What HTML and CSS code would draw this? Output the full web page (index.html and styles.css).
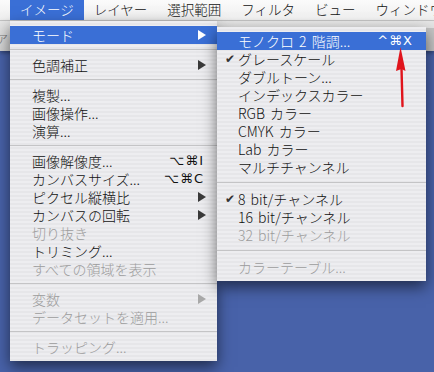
FILE: index.html
```html
<!DOCTYPE html>
<html lang="ja">
<head>
    <meta charset="UTF-8">
    <title>イメージ メニュー</title>
    <link rel="stylesheet" href="styles.css">
</head>
<body>
<!-- Menubar -->
<div class="menubar">
    <span class="menubar-item active">イメージ</span>
    <span class="menubar-item">レイヤー</span>
    <span class="menubar-item">選択範囲</span>
    <span class="menubar-item">フィルタ</span>
    <span class="menubar-item">ビュー</span>
    <span class="menubar-item">ウィンドウ</span>
</div>

<!-- Options bar behind the menus -->
<div class="options-bar">
    <span class="options-label">ア</span>
    <span class="options-edge"></span>
</div>

<!-- Image menu -->
<div class="menu main-menu">
    <div class="menu-item selected"><span class="label">モード</span><span class="arrow"></span></div>
    <div class="separator"></div>
    <div class="menu-item"><span class="label">色調補正</span><span class="arrow"></span></div>
    <div class="separator"></div>
    <div class="menu-item"><span class="label">複製...</span></div>
    <div class="menu-item"><span class="label">画像操作...</span></div>
    <div class="menu-item"><span class="label">演算...</span></div>
    <div class="separator"></div>
    <div class="menu-item"><span class="label">画像解像度...</span><span class="shortcut">⌥⌘I</span></div>
    <div class="menu-item"><span class="label">カンバスサイズ...</span><span class="shortcut">⌥⌘C</span></div>
    <div class="menu-item"><span class="label">ピクセル縦横比</span><span class="arrow"></span></div>
    <div class="menu-item"><span class="label">カンバスの回転</span><span class="arrow"></span></div>
    <div class="menu-item disabled"><span class="label">切り抜き</span></div>
    <div class="menu-item"><span class="label">トリミング...</span></div>
    <div class="menu-item disabled"><span class="label">すべての領域を表示</span></div>
    <div class="separator"></div>
    <div class="menu-item disabled"><span class="label">変数</span><span class="arrow"></span></div>
    <div class="menu-item disabled"><span class="label">データセットを適用...</span></div>
    <div class="separator"></div>
    <div class="menu-item disabled"><span class="label">トラッピング...</span></div>
</div>

<!-- Mode submenu -->
<div class="menu sub-menu">
    <div class="menu-item selected"><span class="label">モノクロ 2 階調...</span><span class="shortcut">^⌘X</span></div>
    <div class="menu-item checked"><span class="label">グレースケール</span></div>
    <div class="menu-item"><span class="label">ダブルトーン...</span></div>
    <div class="menu-item"><span class="label">インデックスカラー</span></div>
    <div class="menu-item"><span class="label">RGB カラー</span></div>
    <div class="menu-item"><span class="label">CMYK カラー</span></div>
    <div class="menu-item"><span class="label">Lab カラー</span></div>
    <div class="menu-item"><span class="label">マルチチャンネル</span></div>
    <div class="separator"></div>
    <div class="menu-item checked"><span class="label">8 bit/チャンネル</span></div>
    <div class="menu-item"><span class="label">16 bit/チャンネル</span></div>
    <div class="menu-item disabled"><span class="label">32 bit/チャンネル</span></div>
    <div class="separator"></div>
    <div class="menu-item disabled"><span class="label">カラーテーブル...</span></div>
</div>

<!-- Red pointer arrow -->
<svg class="pointer" width="16" height="64" viewBox="0 0 16 64">
    <path d="M8.5 22 L9.5 60" stroke="#e0141c" stroke-width="2.4" stroke-linecap="round" fill="none"/>
    <path d="M7.5 1 L12.5 25 L8.5 23 L3 25 Z" fill="#e0141c"/>
</svg>
</body>
</html>
```
FILE: styles.css
```css
/* General */
body {
    margin: 0;
    width: 434px;
    height: 372px;
    overflow: hidden;
    position: relative;
    background-color: #4862a9;
    font-family: "Noto Sans CJK JP", "DejaVu Sans", sans-serif;
    font-size: 14px;
    font-weight: 300;
    color: #111;
}

/* Menubar */
.menubar {
    height: 21px;
    display: flex;
    align-items: stretch;
    padding-left: 10px;
    font-size: 13.5px;
    background: linear-gradient(#fbfbfb, #eeeeee);
    border-bottom: 1px solid #c8c8c8;
    box-sizing: border-box;
    white-space: nowrap;
}

.menubar-item {
    display: flex;
    align-items: center;
    padding: 0 10px;
    line-height: 1;
}

.menubar-item.active {
    background-color: #3a6fd6;
    color: #fff;
}

/* Options bar */
.options-bar {
    height: 30px;
    display: flex;
    justify-content: space-between;
    background: linear-gradient(#e6e6e6, #d2d2d2);
    box-shadow: 0 2px 4px rgba(0, 0, 0, 0.35);
}

.options-label {
    font-size: 12px;
    color: #777;
    padding: 9px 0 0 0;
    margin-left: -4px;
}

.options-edge {
    width: 8px;
    margin-top: 7px;
    border-left: 1px solid #aaa;
    background: #c4c4c4;
}

/* Menus */
.menu {
    position: absolute;
    padding: 5px 0;
    background: repeating-linear-gradient(#ededf0 0, #ededf0 2px, #e6e6e9 2px, #e6e6e9 4px);
    box-shadow: 0 6px 14px rgba(0, 0, 0, 0.55);
    white-space: nowrap;
}

.main-menu {
    left: 10px;
    top: 21px;
    width: 207px;
}

.sub-menu {
    left: 217px;
    top: 27px;
    width: 209px;
}

.menu-item {
    height: 18px;
    line-height: 18px;
    display: flex;
    align-items: center;
    padding: 0 13px 0 22px;
    position: relative;
}

.sub-menu .menu-item {
    padding-left: 21px;
}

.menu-item .label {
    flex: 1;
    word-spacing: 2px;
}

.menu-item .shortcut {
    font-family: "DejaVu Sans", sans-serif;
    font-size: 13px;
    font-weight: normal;
    letter-spacing: 1px;
}

.menu-item .arrow {
    width: 0;
    height: 0;
    margin-right: -2px;
    border-left: 8px solid #3a3a3a;
    border-top: 5px solid transparent;
    border-bottom: 5px solid transparent;
}

.menu-item.selected {
    background-color: #3a6fd6;
    color: #fff;
}

.menu-item.selected .arrow {
    border-left-color: #fff;
}

.menu-item.disabled {
    color: #9c9c9c;
}

.menu-item.disabled .arrow {
    border-left-color: #a8a8a8;
}

.menu-item.checked::before {
    content: "✔";
    position: absolute;
    left: 8px;
    font-family: "DejaVu Sans", sans-serif;
    font-size: 12px;
    color: #333;
}

.separator {
    height: 1px;
    margin: 5px 0 6px;
    background-color: #c4c4c6;
}

.sub-menu .separator {
    margin: 6px 0 7px;
}

/* Pointer overlay */
.pointer {
    position: absolute;
    left: 393px;
    top: 46px;
}
```
